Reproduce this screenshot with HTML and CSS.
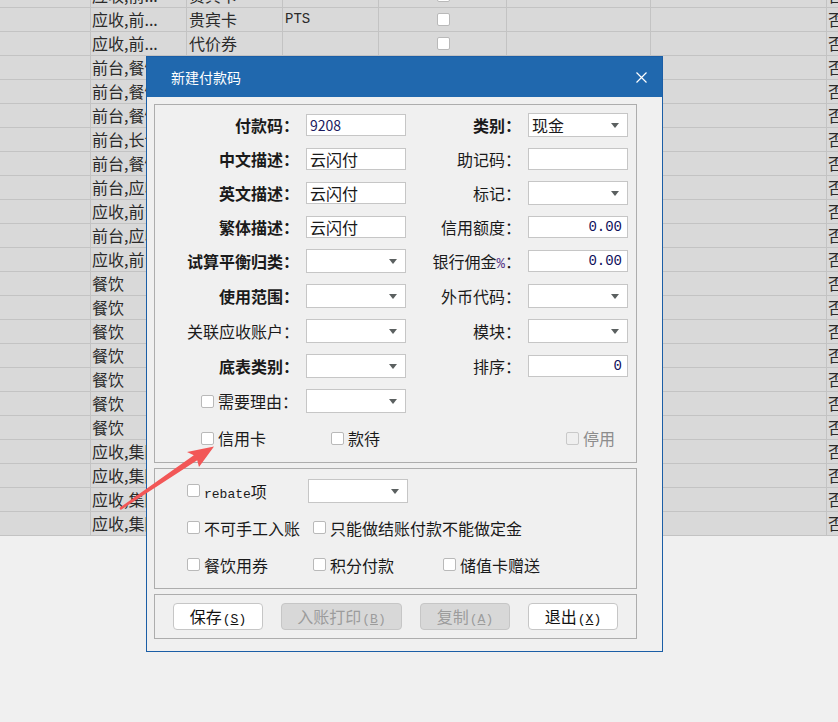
FILE: index.html
```html
<!DOCTYPE html>
<html lang="zh-CN">
<head>
  <meta charset="UTF-8">
  <title>新建付款码</title>
  <link rel="stylesheet" href="styles.css">
</head>
<body>
  <!-- 付款码列表 -->
  <div class="list">
    <div class="row"><span></span><span>应收,前...</span><span>贵宾卡</span><span class="mono">RTS</span><span class="chk"><i class="cb"></i></span><span></span><span></span><span>否</span></div>
    <div class="row"><span></span><span>应收,前...</span><span>贵宾卡</span><span class="mono">PTS</span><span class="chk"><i class="cb"></i></span><span></span><span></span><span>否</span></div>
    <div class="row"><span></span><span>应收,前...</span><span>代价券</span><span></span><span class="chk"><i class="cb"></i></span><span></span><span></span><span>否</span></div>
    <div class="row"><span></span><span>前台,餐饮</span><span></span><span></span><span></span><span></span><span></span><span>否</span></div>
    <div class="row"><span></span><span>前台,餐饮</span><span></span><span></span><span></span><span></span><span></span><span>否</span></div>
    <div class="row"><span></span><span>前台,餐饮</span><span></span><span></span><span></span><span></span><span></span><span>否</span></div>
    <div class="row"><span></span><span>前台,长包</span><span></span><span></span><span></span><span></span><span></span><span>否</span></div>
    <div class="row"><span></span><span>前台,餐饮</span><span></span><span></span><span></span><span></span><span></span><span>否</span></div>
    <div class="row"><span></span><span>前台,应收</span><span></span><span></span><span></span><span></span><span></span><span>否</span></div>
    <div class="row"><span></span><span>应收,前台</span><span></span><span></span><span></span><span></span><span></span><span>否</span></div>
    <div class="row"><span></span><span>前台,应收</span><span></span><span></span><span></span><span></span><span></span><span>否</span></div>
    <div class="row"><span></span><span>应收,前台</span><span></span><span></span><span></span><span></span><span></span><span>否</span></div>
    <div class="row"><span></span><span>餐饮</span><span></span><span></span><span></span><span></span><span></span><span>否</span></div>
    <div class="row"><span></span><span>餐饮</span><span></span><span></span><span></span><span></span><span></span><span>否</span></div>
    <div class="row"><span></span><span>餐饮</span><span></span><span></span><span></span><span></span><span></span><span>否</span></div>
    <div class="row"><span></span><span>餐饮</span><span></span><span></span><span></span><span></span><span></span><span>否</span></div>
    <div class="row"><span></span><span>餐饮</span><span></span><span></span><span></span><span></span><span></span><span>否</span></div>
    <div class="row"><span></span><span>餐饮</span><span></span><span></span><span></span><span></span><span></span><span>否</span></div>
    <div class="row"><span></span><span>餐饮</span><span></span><span></span><span></span><span></span><span></span><span>否</span></div>
    <div class="row"><span></span><span>应收,集团</span><span></span><span></span><span></span><span></span><span></span><span>否</span></div>
    <div class="row"><span></span><span>应收,集团</span><span></span><span></span><span></span><span></span><span></span><span>否</span></div>
    <div class="row"><span></span><span>应收,集团</span><span></span><span></span><span></span><span></span><span></span><span>否</span></div>
    <div class="row"><span></span><span>应收,集团</span><span></span><span></span><span></span><span></span><span></span><span>否</span></div>
  </div>

  <!-- 新建付款码窗口 -->
  <div class="dialog">
    <div class="dialog-title">
      <span>新建付款码</span>
      <svg class="close" width="11" height="11" viewBox="0 0 11 11">
        <path d="M0.5 0.5 L10.5 10.5 M10.5 0.5 L0.5 10.5" stroke="#fff" stroke-width="1.2" fill="none"/>
      </svg>
    </div>

    <div class="dialog-body">
      <div class="group form">
        <div class="lbl b">付款码：</div>
        <div class="field num-sans">9208</div>
        <div class="lbl r b">类别：</div>
        <div class="combo">现金</div>

        <div class="lbl b">中文描述：</div>
        <div class="field">云闪付</div>
        <div class="lbl r">助记码：</div>
        <div class="field"></div>

        <div class="lbl b">英文描述：</div>
        <div class="field">云闪付</div>
        <div class="lbl r">标记：</div>
        <div class="combo"></div>

        <div class="lbl b">繁体描述：</div>
        <div class="field">云闪付</div>
        <div class="lbl r">信用额度：</div>
        <div class="field num">0.00</div>

        <div class="lbl b">试算平衡归类：</div>
        <div class="combo"></div>
        <div class="lbl r">银行佣金<span class="pct">%</span>：</div>
        <div class="field num">0.00</div>

        <div class="lbl b">使用范围：</div>
        <div class="combo"></div>
        <div class="lbl r">外币代码：</div>
        <div class="combo"></div>

        <div class="lbl">关联应收账户：</div>
        <div class="combo"></div>
        <div class="lbl r">模块：</div>
        <div class="combo"></div>

        <div class="lbl b">底表类别：</div>
        <div class="combo"></div>
        <div class="lbl r">排序：</div>
        <div class="field num">0</div>

        <div class="lbl check-lbl"><i class="cb"></i>需要理由：</div>
        <div class="combo"></div>
        <div></div>
        <div></div>

        <div class="flags">
          <label class="opt credit"><i class="cb"></i>信用卡</label>
          <label class="opt treat"><i class="cb"></i>款待</label>
          <label class="opt off"><i class="cb"></i>停用</label>
        </div>
      </div>

      <div class="group opts">
        <label class="opt"><i class="cb"></i><span><span class="mono">rebate</span>项</span></label>
        <div class="combo"></div>
        <div></div>

        <label class="opt"><i class="cb"></i>不可手工入账</label>
        <label class="opt span2"><i class="cb"></i>只能做结账付款不能做定金</label>

        <label class="opt"><i class="cb"></i>餐饮用券</label>
        <label class="opt shift"><i class="cb"></i>积分付款</label>
        <label class="opt"><i class="cb"></i>储值卡赠送</label>
      </div>

      <div class="group btns">
        <button class="btn w90">保存<span class="key">(<u>S</u>)</span></button>
        <button class="btn w121" disabled>入账打印<span class="key">(<u>B</u>)</span></button>
        <button class="btn w90" disabled>复制<span class="key">(<u>A</u>)</span></button>
        <button class="btn w90">退出<span class="key">(<u>X</u>)</span></button>
      </div>
    </div>
  </div>

  <!-- 指向“信用卡”的标注箭头 -->
  <svg class="arrow" width="838" height="722" viewBox="0 0 838 722">
    <polygon points="214,446.5 199,467 197.2,460.3 120.7,509.9 119.3,508.1 193.8,455.3 187,452" fill="#f25757"/>
  </svg>
</body>
</html>
```

FILE: styles.css
```css
* {
  box-sizing: border-box;
}

body {
  margin: 0;
  width: 838px;
  height: 722px;
  overflow: hidden;
  position: relative;
  background: #f0f0f0;
  font-family: "Noto Sans CJK SC", "Noto Sans", sans-serif;
  font-size: 16px;
  color: #1a1a1a;
}

.mono {
  font-family: "Liberation Mono", "DejaVu Sans Mono", monospace;
  font-size: 14px;
}

/* 背景列表 */
.list {
  margin-top: -16px;
}

.list .row {
  display: flex;
  height: 24px;
  background: #d9d9d9;
  border-bottom: 1px solid #c3c3c3;
}

.list .row span {
  flex: none;
  border-right: 1px solid #c3c3c3;
  padding-left: 1px;
  line-height: 23px;
  white-space: nowrap;
  overflow: hidden;
  color: #2a2a2a;
}

.list .row span:nth-child(1) { width: 91px; }
.list .row span:nth-child(2) { width: 96px; }
.list .row span:nth-child(3) { width: 96px; padding-left: 2px; }
.list .row span:nth-child(4) { width: 96px; padding-left: 2px; }
.list .row span:nth-child(5) { width: 128px; }
.list .row span:nth-child(6) { width: 144px; }
.list .row span:nth-child(7) { width: 176px; }
.list .row span:nth-child(8) { flex: 1; border-right: none; }

.list .row span.chk {
  display: flex;
  align-items: center;
  justify-content: center;
}

/* 复选框 */
.cb {
  display: inline-block;
  flex: none;
  width: 13px;
  height: 13px;
  background: #fff;
  border: 1px solid #b9b9b9;
  border-radius: 2px;
}

/* 弹出窗口 */
.dialog {
  position: absolute;
  left: 146px;
  top: 56px;
  width: 517px;
  height: 596px;
  border: 1px solid #1b5ea6;
  background: #f0f0f0;
}

.dialog-title {
  height: 40px;
  background: #2068ae;
  color: #fff;
  font-size: 14px;
  display: flex;
  align-items: center;
  justify-content: space-between;
  padding: 0 15px 0 24px;
}

.dialog-body {
  display: flex;
  flex-direction: column;
  gap: 5px;
  padding: 7px 25px 12px 7px;
}

.group {
  border: 1px solid #adadad;
}

/* 基本信息 */
.form {
  display: grid;
  grid-template-columns: 151px 100px 122px 100px;
  grid-template-rows: 34px 34px 34px 33px 35px 35px 35px 35px 36px 38px;
  align-items: center;
  padding: 3px 0 5px;
}

.lbl {
  text-align: right;
  padding-right: 7px;
  white-space: nowrap;
}

.lbl.b {
  font-weight: bold;
}

.pct {
  font-family: "Liberation Mono", monospace;
  font-size: 14px;
  color: #5a3a8a;
}

.check-lbl {
  display: flex;
  align-items: center;
  justify-content: flex-end;
  gap: 4px;
  padding-right: 8px;
}

.field,
.combo {
  height: 22px;
  background: #fff;
  border: 1px solid #c6c6c6;
  padding: 0 3px;
  line-height: 20px;
  white-space: nowrap;
}

.combo {
  height: 24px;
  line-height: 22px;
  position: relative;
}

.combo::after {
  content: "";
  position: absolute;
  right: 8px;
  top: 9px;
  border-left: 4.5px solid transparent;
  border-right: 4.5px solid transparent;
  border-top: 5px solid #5b6060;
}

.field.num {
  text-align: right;
  padding-right: 5px;
  font-family: "Liberation Mono", "DejaVu Sans Mono", monospace;
  font-size: 14px;
  color: #10105a;
}

.field.num-sans {
  font-size: 14px;
  color: #1a1a5e;
}

.flags {
  grid-column: 1 / -1;
  display: flex;
  align-items: center;
}

.opt {
  display: flex;
  align-items: center;
  gap: 4px;
  white-space: nowrap;
}

.flags .credit { margin-left: 46px; }
.flags .treat { margin-left: 65px; }
.flags .off {
  margin-left: auto;
  margin-right: 13px;
  color: #8c8c8c;
}

.flags .off .cb {
  background: #efefef;
  border-color: #c9c9c9;
}

/* 其他选项 */
.opts {
  display: grid;
  grid-template-columns: 121px 135px auto;
  grid-template-rows: repeat(3, 37px);
  align-items: center;
  padding: 3px 0 5px 32px;
}

.opts .mono {
  font-size: 13px;
}

.opts .combo {
  width: 100px;
}

.opts .span2 {
  grid-column: 2 / 4;
  margin-left: 5px;
}

.opts .shift {
  margin-left: 5px;
}

/* 按钮 */
.btns {
  height: 45px;
  display: flex;
  align-items: center;
  gap: 18px;
  padding-left: 18px;
}

.btn {
  height: 27px;
  background: #fff;
  border: 1px solid #c6c6c6;
  border-radius: 4px;
  font-family: "Noto Sans CJK SC", sans-serif;
  font-size: 16px;
  color: #111;
  padding: 0;
  line-height: 25px;
}

.btn:disabled {
  background: #d8d8d8;
  color: #9c9c9c;
}

.btn .key {
  font-family: "Liberation Mono", monospace;
  font-size: 13px;
  margin-left: 1px;
}

.w90 { width: 90px; }
.w121 { width: 121px; }

/* 标注箭头 */
.arrow {
  position: absolute;
  left: 0;
  top: 0;
  pointer-events: none;
}
```
